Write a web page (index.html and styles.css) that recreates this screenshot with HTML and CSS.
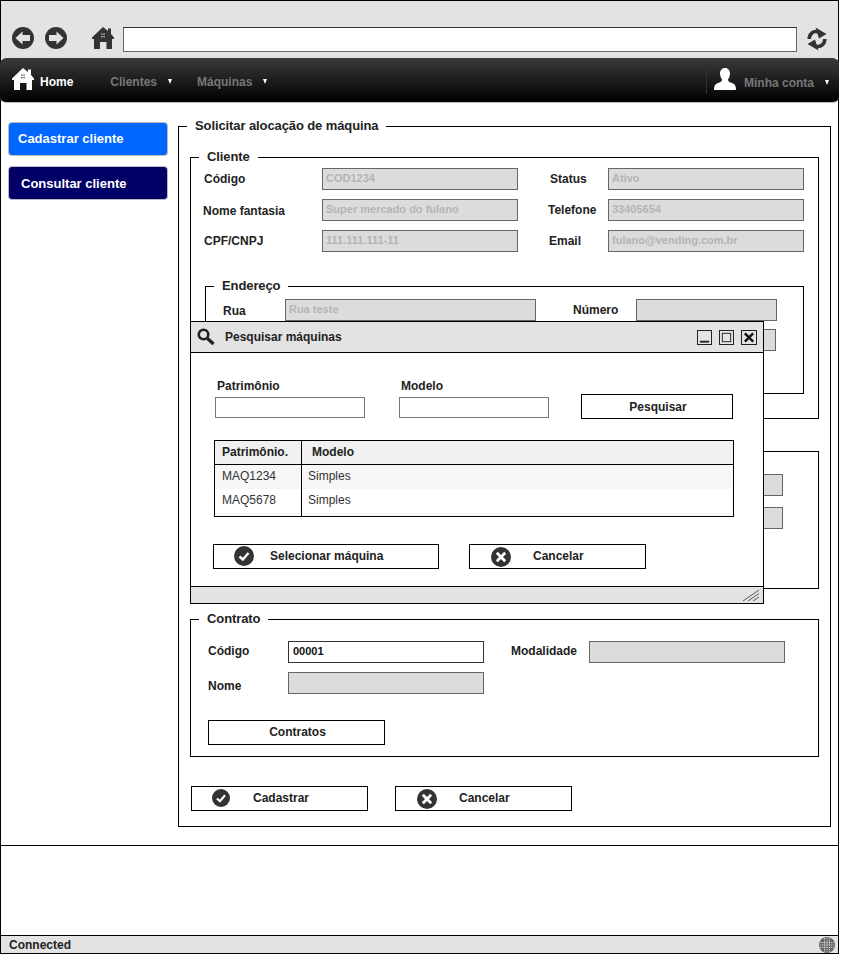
FILE: index.html
```html
<!DOCTYPE html>
<html lang="pt">
<head>
<meta charset="utf-8">
<title>Solicitar alocação de máquina</title>
<link rel="stylesheet" href="styles.css">
</head>
<body>
<svg class="defs" width="0" height="0" aria-hidden="true">
  <symbol id="house" viewBox="0 0 22 22"><path fill-rule="evenodd" d="M11 0L16 4V1.5H19V7L22 10.5V12H20V22H14.5V15H8V22H2V12H0V10.5ZM9.3 6.5V7.7H10.5V6.5ZM11.5 6.5V7.7H12.7V6.5ZM9.3 9V10.2H10.5V9ZM11.5 9V10.2H12.7V9Z"/></symbol>
  <symbol id="ok" viewBox="0 0 20 20"><circle cx="10" cy="10" r="10" fill="#333"/><path d="M5.500 10.500L8.800 13.500L14.500 7" fill="none" stroke="#fff" stroke-width="2.400"/></symbol>
  <symbol id="no" viewBox="0 0 20 20"><circle cx="10" cy="10" r="10" fill="#333"/><path d="M5.800 5.800L14.200 14.200M14.200 5.800L5.800 14.200" fill="none" stroke="#fff" stroke-width="2.800"/></symbol>
</svg>
<div class="window">
  <header class="toolbar">
    <svg class="nav-round" viewBox="0 0 22 22"><circle cx="11" cy="11" r="11" fill="#333"/><path d="M3.500 11L10.500 4.500V8H18V14H10.500V17.500Z" fill="#e3e3e3"/></svg>
    <svg class="nav-round" viewBox="0 0 22 22"><circle cx="11" cy="11" r="11" fill="#333"/><path d="M18.500 11L11.500 4.500V8H4V14H11.500V17.500Z" fill="#e3e3e3"/></svg>
    <svg class="house dark"><use href="#house"/></svg>
    <div class="address"></div>
    <svg class="refresh" viewBox="0 0 20 24"><path d="M2.200 12C2.200 7 6 3.500 11 4.800" fill="none" stroke="#333" stroke-width="3.600"/><path d="M8.500 0.500L19.500 7L12 11.500Z" fill="#333"/><path d="M17.800 12C17.800 17 14 20.500 9 19.200" fill="none" stroke="#333" stroke-width="3.600"/><path d="M11.500 23.500L0.500 17L8 12.500Z" fill="#333"/></svg>
  </header>
  <nav class="navbar">
    <svg class="house light"><use href="#house"/></svg>
    <a class="nav-home">Home</a>
    <a class="nav-link clientes">Clientes</a><i class="caret"></i>
    <a class="nav-link maquinas">Máquinas</a><i class="caret"></i>
    <div class="account">
      <svg class="user" viewBox="0 0 22 22"><path fill="#fff" d="M11 0C14.300 0 16 2.500 16 5.500C16 8 15 10 14 11.500C14 13 15 14 18 15C21 16 22 18 22 22H0C0 18 1 16 4 15C7 14 8 13 8 11.500C7 10 6 8 6 5.500C6 2.500 7.700 0 11 0Z"/></svg>
      <a class="nav-link">Minha conta</a><i class="caret"></i>
    </div>
  </nav>
  <div class="content">
    <aside class="sidebar">
      <a class="side-btn primary">Cadastrar cliente</a>
      <a class="side-btn secondary">Consultar cliente</a>
    </aside>
    <fieldset class="group main">
      <legend>Solicitar alocação de máquina</legend>
      <fieldset class="group cliente">
        <legend>Cliente</legend>
        <div class="grid grid-cliente">
          <span class="lbl">Código</span><div class="field">COD1234</div>
          <span class="lbl l2">Status</span><div class="field">Ativo</div>
          <span class="lbl nudge down">Nome fantasia</span><div class="field">Super mercado do fulano</div>
          <span class="lbl l2 nudge2">Telefone</span><div class="field">33405654</div>
          <span class="lbl">CPF/CNPJ</span><div class="field">111.111.111-11</div>
          <span class="lbl l2 nudge">Email</span><div class="field">fulano@vending.com.br</div>
        </div>
        <fieldset class="group endereco">
          <legend>Endereço</legend>
          <div class="grid grid-endereco">
            <span class="lbl down">Rua</span><div class="field">Rua teste</div>
            <span class="lbl l3">Número</span><div class="field"></div>
            <span class="lbl"></span><div class="field"></div>
            <span class="lbl l3"></span><div class="field narrow"></div>
          </div>
        </fieldset>
      </fieldset>
      <fieldset class="group maquina">
        <div class="stack-right">
          <div class="field"></div>
          <div class="field"></div>
        </div>
      </fieldset>
      <fieldset class="group contrato">
        <legend>Contrato</legend>
        <div class="grid grid-contrato">
          <span class="lbl up">Código</span><div class="field active">00001</div>
          <span class="lbl l4 up">Modalidade</span><div class="field"></div>
          <span class="lbl down3">Nome</span><div class="field"></div>
        </div>
        <a class="btn btn-contratos">Contratos</a>
      </fieldset>
      <div class="actions">
        <a class="btn btn-icon"><svg class="ico"><use href="#ok"/></svg><span class="t-cad">Cadastrar</span></a>
        <a class="btn btn-icon"><svg class="ico big"><use href="#no"/></svg><span class="t-can">Cancelar</span></a>
      </div>
    </fieldset>
  </div>
  <div class="blank"></div>
  <footer class="status">
    <span class="status-text">Connected</span>
    <svg class="globe" viewBox="0 0 16 16"><circle cx="8" cy="8" r="8" fill="#666"/><path d="M1 5.500H15M1 8H15M1 10.500H15M5.500 1V15M8 1V15M10.500 1V15" stroke="#ddd" stroke-width=".9" stroke-dasharray="1.300 .9"/></svg>
  </footer>

  <section class="dialog">
    <div class="dlg-title">
      <svg class="search" viewBox="0 0 18 18"><circle cx="6.500" cy="6.500" r="4.800" fill="none" stroke="#222" stroke-width="2.600"/><path d="M10.500 10.500L16.500 16" stroke="#222" stroke-width="3.400"/></svg>
      <span class="dlg-name">Pesquisar máquinas</span>
      <div class="dlg-controls">
        <span class="ctl"><svg viewBox="0 0 14 14"><path d="M2 11.500H12" stroke="#222" stroke-width="2"/></svg></span>
        <span class="ctl"><svg viewBox="0 0 14 14"><rect x="2.500" y="2.500" width="9" height="9" fill="none" stroke="#222"/></svg></span>
        <span class="ctl ctl-close"><svg viewBox="0 0 14 14"><path d="M2.500 2.500L11.500 11.500M11.500 2.500L2.500 11.500" stroke="#111" stroke-width="2.600"/></svg></span>
      </div>
    </div>
    <div class="dlg-body">
      <div class="search-row">
        <label class="s-col"><span class="lbl">Patrimônio</span><span class="s-input"></span></label>
        <label class="s-col"><span class="lbl">Modelo</span><span class="s-input"></span></label>
        <a class="btn btn-search">Pesquisar</a>
      </div>
      <table class="results">
        <thead><tr><th class="c1">Patrimônio.</th><th class="c2">Modelo</th></tr></thead>
        <tbody>
          <tr class="odd"><td class="c1">MAQ1234</td><td class="c2">Simples</td></tr>
          <tr><td class="c1">MAQ5678</td><td class="c2">Simples</td></tr>
          <tr class="odd tail"><td class="c1"></td><td class="c2"></td></tr>
        </tbody>
      </table>
      <div class="dlg-actions">
        <a class="btn btn-icon btn-select"><svg class="ico big"><use href="#ok"/></svg><span class="t-sel">Selecionar máquina</span></a>
        <a class="btn btn-icon btn-cancel"><svg class="ico big"><use href="#no"/></svg><span class="t-can2">Cancelar</span></a>
      </div>
    </div>
    <div class="dlg-status">
      <svg class="grip" viewBox="0 0 18 12"><path d="M1 12L17 1M6 12L17 4.500M11 12L17 8" stroke="#555" stroke-width="1"/></svg>
    </div>
  </section>
</div>
</body>
</html>
```
FILE: styles.css
```css
* { box-sizing: border-box; }
html, body { margin: 0; padding: 0; background: #fff; }
body { font: bold 12px/15px "Liberation Sans", Arial, sans-serif; color: #222; }
.defs { position: absolute; }
a { display: block; }

.window { position: relative; width: 839px; height: 954px; border: 1px solid #000; display: flex; flex-direction: column; background: #fff; }

.toolbar { height: 57px; flex: none; background: #e3e3e3; display: flex; align-items: flex-start; padding-top: 26px; }
.nav-round { width: 22px; height: 22px; margin-left: 11px; flex: none; }
.house { width: 22px; height: 22px; flex: none; }
.house.dark { fill: #333; margin-left: 25px; }
.address { width: 674px; height: 25px; margin-left: 9px; background: #fff; border: 1px solid #666; border-top-color: #333; }
.refresh { width: 20px; height: 24px; margin-left: 10px; }

.navbar { height: 45px; flex: none; margin: 0 -1px; display: flex; align-items: center; border-radius: 6px; background: linear-gradient(#3a3a3a, #000); border-bottom: 1px solid #bbb; position: relative; }
.house.light { fill: #fff; margin-left: 12px; margin-top: -3px; }
.nav-home { color: #fff; margin-left: 6px; margin-top: 5px; }
.nav-link { color: #777; margin-top: 5px; }
.clientes { margin-left: 37px; }
.maquinas { margin-left: 25px; }
.caret { width: 0; height: 0; border: solid transparent; border-width: 5px 2px 0; border-top-color: #fff; margin-left: 11px; margin-top: 3px; flex: none; }
.account { margin-left: auto; height: 26px; display: flex; align-items: center; border-left: 1px solid #333; padding-left: 7px; padding-right: 10px; margin-top: 1px; }
.user { width: 22px; height: 22px; margin-right: 8px; margin-top: -3px; }

.content { display: flex; align-items: flex-start; padding-top: 16px; flex: none; }
.sidebar { width: 160px; margin-left: 7px; margin-right: 10px; margin-top: 3px; display: flex; flex-direction: column; gap: 10px; }
.side-btn { height: 34px; border-radius: 4px; border: 1px solid #bbb; color: #fff; font-size: 13px; }
.primary { background: #06f; padding-left: 9px; line-height: 32px; }
.secondary { background: #006; padding-left: 12px; line-height: 33px; }

.group { margin: 0; border: 1px solid #000; min-width: 0; padding: 0; }
.group > legend { padding: 0 8px 2px; margin-left: 8px; font-size: 13px; letter-spacing: -0.1px; line-height: 13px; white-space: nowrap; }
.main { width: 653px; padding: 16px 11px 15px; }
.main > legend { margin-left: -3px; padding: 0 7px 2px 8px; }
.cliente { padding: 3px 0 24px; }
.maquina { margin-top: 32px; height: 138px; padding-top: 22px; }
.contrato { margin-top: 23px; padding: 14px 0 11px; }
.endereco { margin: 27px 14px 0; padding: 5px 0 42px; }

.grid { display: grid; align-items: center; }
.grid-cliente { grid-template-columns: 118px 196px 90px 196px; row-gap: 9px; grid-auto-rows: 22px; padding-left: 13px; }
.grid-endereco { grid-template-columns: 62px 251px 100px 141px; row-gap: 8px; grid-auto-rows: 22px; padding-left: 17px; }
.grid-contrato { grid-template-columns: 80px 196px 105px 196px; row-gap: 9px; grid-auto-rows: 22px; padding-left: 17px; }

.lbl { color: #222; display: block; white-space: nowrap; }
.l2 { padding-left: 32px; }
.l3 { padding-left: 37px; }
.l4 { padding-left: 27px; }
.nudge { margin-left: -1px; }
.nudge2 { margin-left: -2px; }
.down { margin-top: 2px; }
.up { margin-bottom: 2px; }
.down3 { margin-top: 6px; }

.field { height: 22px; background: #dcdcdc; border: 1px solid #666; color: #b4b4b4; font-size: 11px; line-height: 18px; padding-left: 3px; }
.field.narrow { width: 140px; }
.field.active { background: #fff; color: #111; border-color: #333; padding-left: 4px; }
.stack-right { width: 196px; margin-left: 396px; display: flex; flex-direction: column; gap: 11px; }

.btn { border: 1px solid #000; background: #fff; height: 25px; line-height: 23px; text-align: center; color: #222; }
.btn-contratos { width: 177px; margin: 26px 0 0 17px; padding-left: 2px; }
.actions { display: flex; gap: 27px; margin-top: 29px; padding-left: 1px; }
.btn-icon { width: 177px; position: relative; display: block; text-align: left; }
.ico { position: absolute; width: 18px; height: 18px; left: 20px; top: 2px; }
.ico.big { width: 20px; height: 20px; top: 2px; left: 21px; }
.btn-select .ico.big { left: 20px; top: 1px; }
.t-cad { margin-left: 61px; }
.t-can { margin-left: 63px; }

.blank { flex: 1; margin-top: 18px; border-top: 1px solid #000; }
.status { height: 18px; flex: none; background: #e3e3e3; border-top: 1px solid #000; display: flex; align-items: center; justify-content: space-between; padding: 0 3px 0 8px; }
.status-text { margin-top: 1px; }
.globe { width: 16px; height: 16px; margin-top: 1px; }

.dialog { position: absolute; left: 189px; top: 320px; width: 574px; height: 283px; background: #fff; border: 1px solid #000; display: flex; flex-direction: column; }
.dlg-title { height: 31px; flex: none; background: #e3e3e3; border-bottom: 1px solid #000; display: flex; align-items: center; padding-left: 6px; }
.search { width: 18px; height: 18px; }
.dlg-name { margin-left: 10px; }
.dlg-controls { margin-left: auto; display: flex; gap: 7px; margin-right: 6px; }
.ctl { width: 15px; height: 15px; border: 1px solid #222; display: block; }
.ctl-close { width: 16px; }
.ctl svg { display: block; width: 100%; height: 100%; }
.dlg-body { flex: 1; padding: 26px 0 0 24px; }
.search-row { display: flex; align-items: flex-end; }
.s-col { width: 184px; display: block; }
.s-col + .s-col { width: 182px; }
.s-col .lbl { padding-left: 2px; }
.s-input { display: block; width: 150px; height: 21px; margin-top: 3px; border: 1px solid #777; background: #fff; }
.btn-search { width: 152px; margin-bottom: -1px; line-height: 24px; padding-left: 2px; }
.results { margin: 22px 0 0 -1px; width: 520px; height: 77px; border-collapse: separate; border-spacing: 0; border: 1px solid #000; table-layout: fixed; }
.results th { height: 24px; background: #f0f0f0; border-bottom: 1px solid #000; text-align: left; padding: 0 0 0 7px; }
.results td { height: 24px; font-weight: normal; padding: 0 0 2px 7px; color: #333; }
.results .c1 { width: 87px; border-right: 1px solid #000; }
.results th.c2 { padding-left: 10px; }
.results td.c2 { padding-left: 6px; }
.results .odd td { background: #f7f7f7; }
.results .tail td { height: 3px; line-height: 0; padding: 0; }
.dlg-actions { display: flex; gap: 30px; margin: 27px 0 0 -2px; }
.btn-select { width: 226px; }
.t-sel { margin-left: 56px; }
.t-can2 { margin-left: 63px; }
.dlg-status { height: 17px; flex: none; background: #e3e3e3; border-top: 1px solid #000; position: relative; }
.grip { position: absolute; right: 3px; bottom: 2px; width: 18px; height: 12px; }
```
